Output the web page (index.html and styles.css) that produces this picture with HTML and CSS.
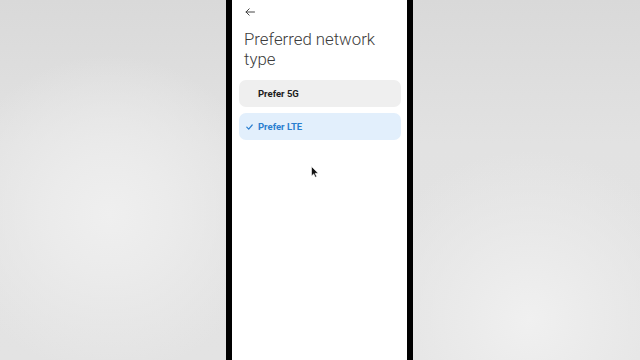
FILE: index.html
```html
<!DOCTYPE html>
<html>
<head>
<meta charset="utf-8">
<link rel="stylesheet" href="styles.css">
</head>
<body>
<div class="stage">
  <div class="phone">
    <div class="screen">
      <div class="topbar">
        <svg class="back" width="10" height="8" viewBox="0 0 10 8"><path d="M9.5 4H1M4.2 0.8L1 4l3.2 3.2" fill="none" stroke="#444" stroke-width="1" stroke-linecap="round" stroke-linejoin="round"/></svg>
      </div>
      <h1 class="title">Preferred network type</h1>
      <div class="options">
        <div class="option">
          <span class="check"></span>
          <span class="label">Prefer 5G</span>
        </div>
        <div class="option selected">
          <span class="check"><svg width="7" height="6" viewBox="0 0 7 6"><path d="M0.8 3.2l1.9 1.9L6.2 1" fill="none" stroke="#2a7fd0" stroke-width="1.2" stroke-linecap="round" stroke-linejoin="round"/></svg></span>
          <span class="label">Prefer LTE</span>
        </div>
      </div>
      <svg class="cursor" width="8" height="12" viewBox="0 0 8 12"><path d="M0.5 0.5v9.5l2.2-2.1 1.6 3.4 1.4-0.7-1.6-3.3h3.1z" fill="#111" stroke="#fff" stroke-width="0.6"/></svg>
    </div>
  </div>
</div>
</body>
</html>
```

FILE: styles.css
```css
* { box-sizing: border-box; margin: 0; padding: 0; }
html, body { width: 640px; height: 360px; overflow: hidden; }
body {
  font-family: Roboto, "Noto Sans", Arial, sans-serif;
  background:
    radial-gradient(circle at 110px 215px, #efefef 0, #ebebeb 60px, rgba(225,225,225,0) 160px),
    radial-gradient(circle at 530px 320px, #f0f0f0 0, #ebebeb 60px, rgba(225,225,225,0) 170px),
    linear-gradient(#d9d9d9, #e2e2e2 40%, #e3e3e3);
}
.stage {
  display: flex;
  justify-content: flex-start;
  height: 360px;
  padding-left: 226px;
}
.phone {
  width: 187px;
  height: 360px;
  background: #000;
  padding: 0 6px;
}
.screen {
  position: relative;
  background: #fff;
  height: 100%;
  padding: 0 6px 0 7px;
}
.topbar {
  height: 25px;
  padding: 8px 0 0 6px;
}
.back { display: block; }
.title {
  font-weight: 300;
  font-size: 16.8px;
  line-height: 20px;
  color: #3c3c3c;
  padding: 4px 0 0 5px;
  height: 55px;
}
.options {
  display: flex;
  flex-direction: column;
  gap: 6px;
}
.option {
  height: 27px;
  border-radius: 7px;
  background: #efefef;
  display: flex;
  align-items: center;
  padding-left: 7px;
}
.option.selected { background: #e2effc; }
.check {
  width: 7px;
  height: 12px;
  display: flex;
  align-items: center;
  justify-content: center;
  margin-right: 5px;
}
.label {
  font-size: 9.5px;
  font-weight: 700;
  color: #1c1c1c;
}
.selected .label { color: #2a7fd0; }
.cursor {
  position: absolute;
  left: 79px;
  top: 166px;
}
```
